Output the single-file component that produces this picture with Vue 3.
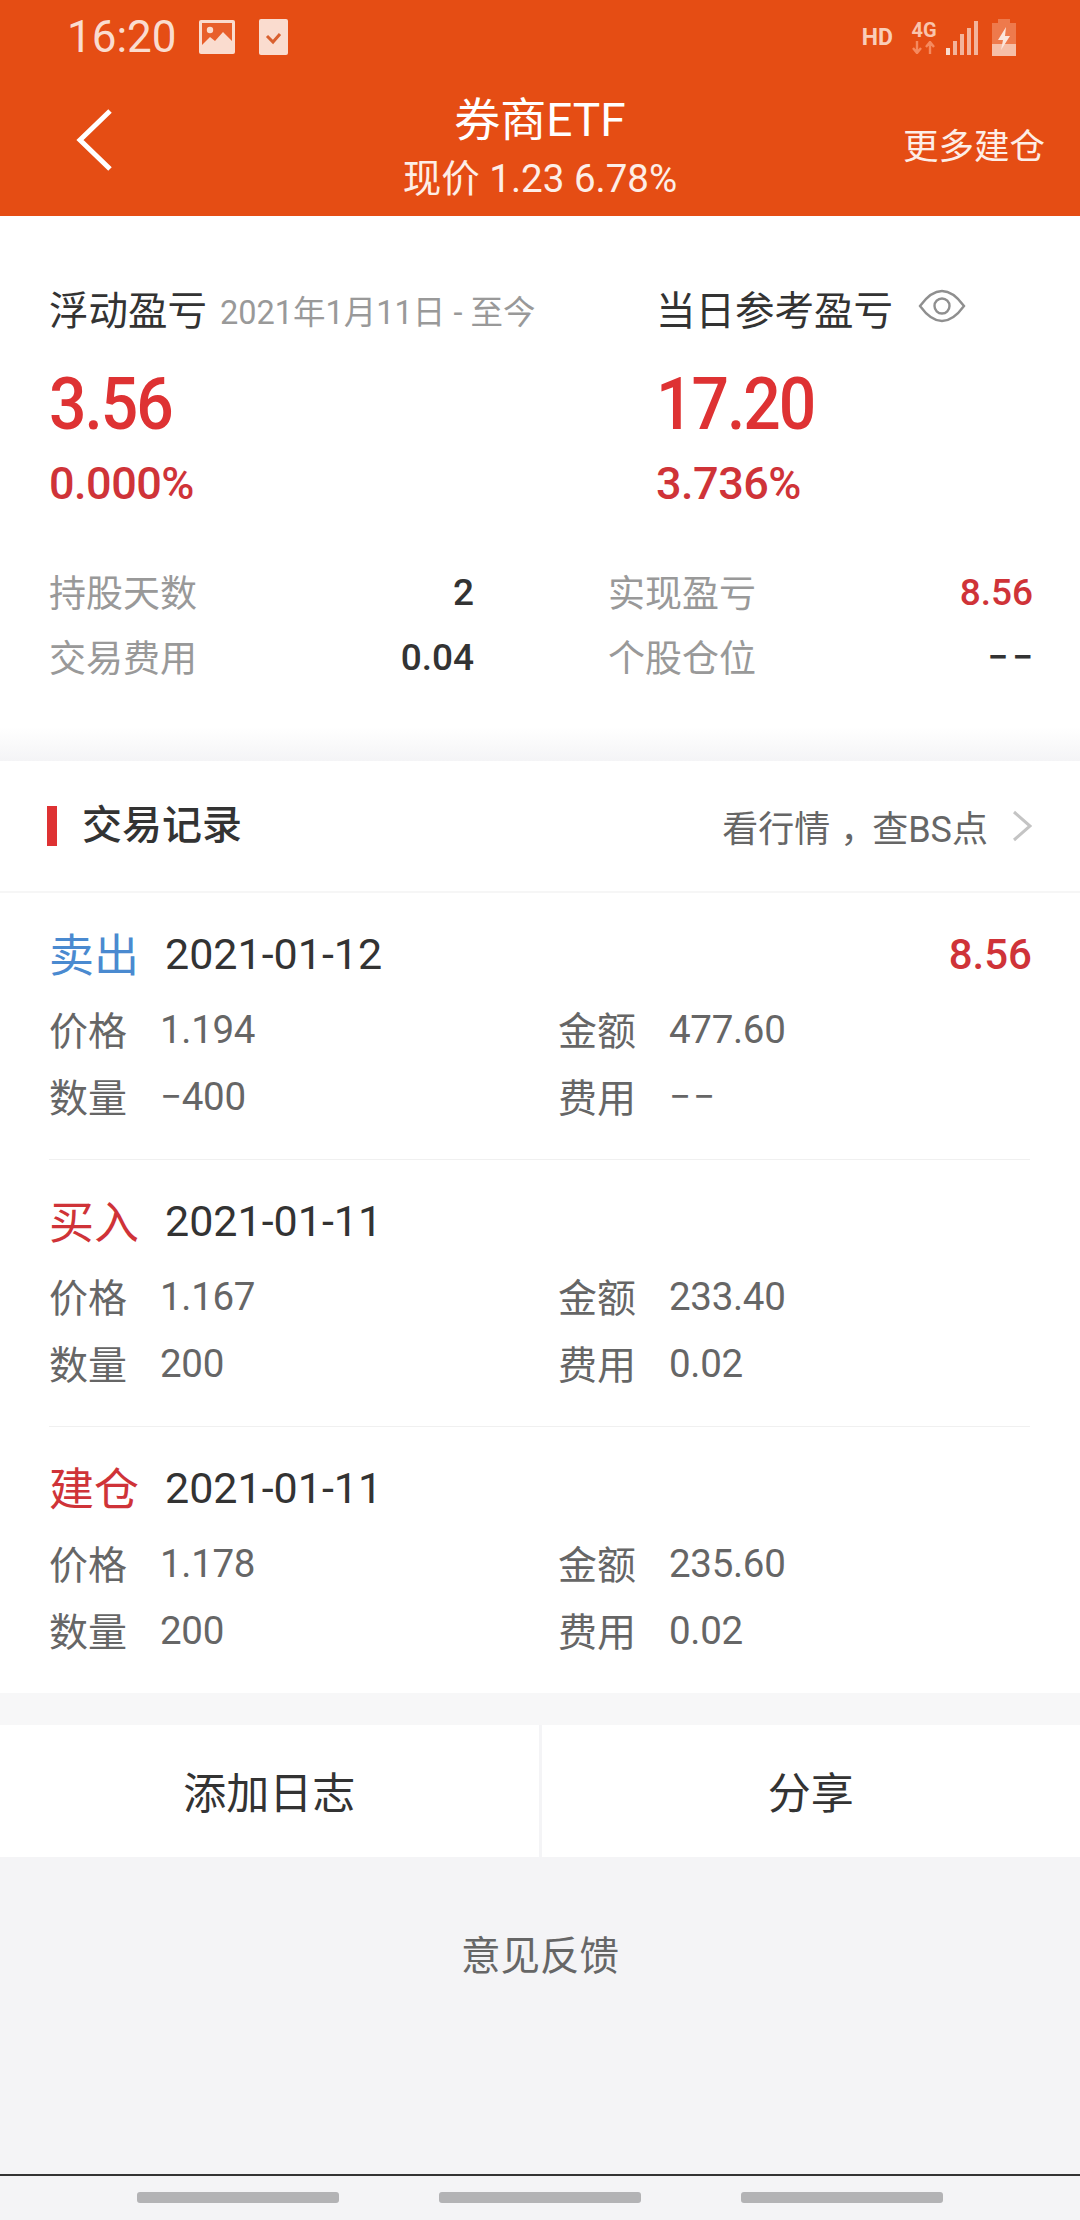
<template>
  <div class="page">
    <header class="header">
      <div class="status">
        <div class="status-left">
          <span class="time">16:20</span>
          <svg class="ic-image" width="36" height="34" viewBox="0 0 36 34">
            <rect width="36" height="34" rx="2" fill="#fadccf" />
            <rect x="3" y="3" width="30" height="28" fill="#e85f2b" />
            <circle cx="11" cy="10" r="3.2" fill="#fadccf" />
            <path d="M3 25 L11 17 L16 21 L24 12 L33 21 V31 H3 Z" fill="#fadccf" />
          </svg>
          <svg class="ic-check" width="29" height="36" viewBox="0 0 29 36">
            <rect width="29" height="36" rx="2" fill="#fadccf" />
            <path d="M8 17 L14 23 L21 15" fill="none" stroke="#d9602f" stroke-width="3" />
          </svg>
        </div>
        <div class="status-right">
          <span class="hd">HD</span>
          <div class="net">
            <span>4G</span>
            <svg width="26" height="13" viewBox="0 0 26 13">
              <path d="M6 0 V11 M2 7 L6 12 L10 7 M19 13 V2 M15 6 L19 1 L23 6" fill="none" stroke="#f58a5f" stroke-width="2.4" />
            </svg>
          </div>
          <svg class="signal" width="32" height="34" viewBox="0 0 32 34">
            <rect x="0" y="27" width="4" height="7" fill="#fadccf" />
            <rect x="7" y="20" width="4" height="14" fill="#f3b49b" />
            <rect x="14" y="13" width="4" height="21" fill="#f3b49b" />
            <rect x="21" y="7" width="4" height="27" fill="#f3b49b" />
            <rect x="28" y="0" width="4" height="34" fill="#f3b49b" />
          </svg>
          <svg class="battery" width="24" height="37" viewBox="0 0 24 37">
            <rect x="6" y="0" width="12" height="4" fill="#ee7a4c" />
            <rect x="0" y="4" width="24" height="21" fill="#ee7a4c" />
            <rect x="0" y="25" width="24" height="12" fill="#f6bfa8" />
            <path d="M14 8 L6 21 H11 L9 31 L18 17 H13 Z" fill="#fbe6dc" />
          </svg>
        </div>
      </div>
      <div class="nav">
        <div class="back">
          <svg width="36" height="64" viewBox="0 0 36 64">
            <path d="M34 3 L4 32 L34 61" fill="none" stroke="#fff" stroke-width="5" />
          </svg>
        </div>
        <div class="nav-center">
          <div class="nav-title">券商ETF</div>
          <div class="nav-sub">现价 1.23 6.78%</div>
        </div>
        <div class="nav-more">更多建仓</div>
      </div>
    </header>

    <section class="summary">
      <div class="totals">
        <div class="total">
          <div class="total-title">
            <span>浮动盈亏</span>
            <span class="total-date">2021年1月11日 - 至今</span>
          </div>
          <div class="total-value">3.56</div>
          <div class="total-pct">0.000%</div>
        </div>
        <div class="total">
          <div class="total-title">
            <span>当日参考盈亏</span>
            <svg class="eye" width="48" height="34" viewBox="0 0 48 34">
              <path d="M2 17 C10 6 17 2 24 2 C31 2 38 6 46 17 C38 28 31 32 24 32 C17 32 10 28 2 17 Z" fill="none" stroke="#8f8f8f" stroke-width="2.4" />
              <circle cx="24" cy="17" r="7.5" fill="none" stroke="#8f8f8f" stroke-width="2.4" />
            </svg>
          </div>
          <div class="total-value">17.20</div>
          <div class="total-pct">3.736%</div>
        </div>
      </div>
      <div class="stats">
        <div v-for="s in stats" :key="s.label" class="stat">
          <span class="stat-label">{{ s.label }}</span>
          <span class="stat-value" :class="{ red: s.red, dash: s.value === '−−' }">{{ s.value }}</span>
        </div>
      </div>
    </section>

    <div class="gap-fade"></div>

    <section class="records">
      <div class="records-head">
        <div class="records-title">交易记录</div>
        <div class="records-link">
          <span>看行情<span class="comma">，</span>查BS点</span>
          <svg width="20" height="32" viewBox="0 0 20 32">
            <path d="M2 2 L18 16 L2 30" fill="none" stroke="#c4c4c4" stroke-width="3" />
          </svg>
        </div>
      </div>
      <div v-for="r in records" :key="r.type + r.date + r.price" class="record">
        <div class="record-head">
          <span class="record-type" :class="r.color">{{ r.type }}</span>
          <span class="record-date">{{ r.date }}</span>
          <span v-if="r.profit" class="record-profit">{{ r.profit }}</span>
        </div>
        <div class="fields">
          <div class="field"><span class="field-label">价格</span><span class="field-value">{{ r.price }}</span></div>
          <div class="field"><span class="field-label">金额</span><span class="field-value">{{ r.amount }}</span></div>
          <div class="field"><span class="field-label">数量</span><span class="field-value">{{ r.qty }}</span></div>
          <div class="field"><span class="field-label">费用</span><span class="field-value" :class="{ dash: r.fee === '−−' }">{{ r.fee }}</span></div>
        </div>
      </div>
    </section>

    <div class="gap"></div>

    <div class="actions">
      <div class="action">添加日志</div>
      <div class="action">分享</div>
    </div>

    <div class="feedback">意见反馈</div>

    <div class="softkeys">
      <span></span>
      <span></span>
      <span></span>
    </div>
  </div>
</template>

<script setup>
const stats = [
  { label: '持股天数', value: '2' },
  { label: '实现盈亏', value: '8.56', red: true },
  { label: '交易费用', value: '0.04' },
  { label: '个股仓位', value: '−−' },
]

const records = [
  { type: '卖出', color: 'blue', date: '2021-01-12', profit: '8.56', price: '1.194', amount: '477.60', qty: '−400', fee: '−−' },
  { type: '买入', color: 'crimson', date: '2021-01-11', price: '1.167', amount: '233.40', qty: '200', fee: '0.02' },
  { type: '建仓', color: 'crimson', date: '2021-01-11', price: '1.178', amount: '235.60', qty: '200', fee: '0.02' },
]
</script>

<style scoped>
.page {
  width: 1080px;
  height: 2220px;
  display: flex;
  flex-direction: column;
  background: #f4f4f6;
  font-family: Roboto, "Noto Sans CJK SC", sans-serif;
  color: #333;
}

.header {
  height: 216px;
  background: #e54d14;
  color: #fff;
}

.status {
  height: 74px;
  display: flex;
  justify-content: space-between;
  align-items: center;
  padding: 0 64px 0 67px;
  color: #fadccf;
}

.status-left,
.status-right {
  display: flex;
  align-items: center;
}

.time {
  font-size: 44px;
  margin-right: 22px;
}

.ic-check {
  margin-left: 24px;
}

.hd {
  font-size: 23px;
  font-weight: 700;
  color: #f9cdb9;
  margin-right: 18px;
}

.net {
  display: flex;
  flex-direction: column;
  align-items: center;
  font-size: 20px;
  font-weight: 700;
  line-height: 20px;
  color: #f9c4ad;
  margin-right: 9px;
}

.net svg {
  margin-top: 1px;
}

.signal {
  margin-right: 14px;
  margin-top: 2px;
}

.nav {
  display: grid;
  grid-template-columns: 1fr auto 1fr;
  padding-top: 16px;
  align-items: center;
}

.back {
  padding: 0 0 18px 76px;
  display: flex;
}

.nav-center {
  text-align: center;
}

.nav-title {
  font-size: 46px;
  line-height: 60px;
}

.nav-sub {
  font-size: 38.5px;
  line-height: 58px;
  color: #fdeee7;
}

.nav-more {
  justify-self: end;
  font-size: 35.5px;
  padding: 0 35px 12px 0;
  color: #fdeee7;
}

.summary {
  background: #fff;
  padding: 66px 47px 37px 49px;
}

.totals {
  display: grid;
  grid-template-columns: 607px 1fr;
}

.total-title {
  display: flex;
  align-items: center;
  height: 50px;
  font-size: 39.5px;
  color: #333;
}

.total-date {
  font-size: 32.5px;
  color: #999;
  margin-left: 13px;
  margin-top: 4px;
}

.eye {
  margin-left: 25px;
  margin-top: -2px;
}

.total-value {
  margin-top: 38px;
  margin-bottom: -1px;
  font-size: 66px;
  line-height: 70px;
  font-weight: 500;
  letter-spacing: -2px;
  color: #de3233;
  transform: scaleY(1.1);
}

.total-pct {
  margin-top: 20px;
  font-size: 45px;
  line-height: 50px;
  font-weight: 500;
  letter-spacing: -0.5px;
  color: #cf3338;
}

.stats {
  margin-top: 51px;
  display: grid;
  grid-template-columns: 425px 425px;
  column-gap: 134px;
}

.stat {
  display: flex;
  justify-content: space-between;
  align-items: center;
  height: 65px;
}

.stat-label {
  font-size: 37px;
  color: #999;
  margin-bottom: 3px;
}

.stat-value {
  font-size: 37px;
  font-weight: 500;
  color: #333;
}

.stat-value.red {
  color: #cf3338;
}

.stat-value.dash {
  letter-spacing: 4px;
  margin-right: -4px;
}

.gap-fade {
  height: 34px;
  background: linear-gradient(#fff, #f4f4f6);
}

.records {
  background: #fff;
  height: 932px;
}

.records-head {
  height: 130px;
  display: flex;
  justify-content: space-between;
  align-items: center;
  padding: 0 48px 0 47px;
  border-bottom: 2px solid #f6f6f6;
}

.records-title {
  font-size: 40px;
  font-weight: 500;
  color: #333;
  border-left: 10px solid #de3233;
  padding-left: 25px;
  line-height: 40px;
}

.records-link {
  display: flex;
  align-items: center;
  gap: 24px;
  font-size: 36px;
  color: #666;
}

.comma {
  margin-left: 10px;
  margin-right: -4px;
}

.record {
  margin: 0 50px 0 49px;
  height: 267px;
  padding-top: 31px;
  box-sizing: border-box;
  border-bottom: 1px solid #f0f0f0;
}

.record:last-child {
  border-bottom: none;
}

.record-head {
  display: flex;
  align-items: center;
  height: 60px;
}

.record-type {
  font-size: 45px;
  width: 116px;
  margin-bottom: 4px;
}

.record-type.blue {
  color: #4a8ad0;
}

.record-type.crimson {
  color: #cf3338;
}

.record-date {
  font-size: 43px;
  color: #333;
}

.record-profit {
  margin-left: auto;
  margin-right: -2px;
  font-size: 42px;
  font-weight: 500;
  color: #cf3338;
}

.fields {
  margin-top: 12px;
  display: grid;
  grid-template-columns: 509px 1fr;
  grid-auto-rows: 67px;
}

.field {
  display: flex;
  align-items: center;
  color: #666;
}

.field-label {
  font-size: 39px;
  width: 111px;
  margin-bottom: 3px;
}

.field-value {
  font-size: 38.5px;
  letter-spacing: -0.3px;
}

.field-value.dash {
  letter-spacing: 2px;
}

.gap {
  height: 32px;
  background: #f7f7f8;
}

.actions {
  height: 132px;
  display: flex;
  background: #fff;
}

.action {
  flex: 1;
  display: flex;
  align-items: center;
  justify-content: center;
  font-size: 43px;
  color: #333;
  padding-bottom: 3px;
}

.action:first-child {
  border-right: 3px solid #f4f4f6;
}

.feedback {
  flex: 1;
  padding-top: 70px;
  line-height: 60px;
  text-align: center;
  font-size: 39.5px;
  color: #666;
}

.softkeys {
  height: 46px;
  box-sizing: border-box;
  border-top: 2px solid #333;
  display: flex;
  justify-content: space-between;
  padding: 16px 137px 0;
}

.softkeys span {
  width: 202px;
  height: 11px;
  border-radius: 3px;
  background: #b3b3b5;
}
</style>
